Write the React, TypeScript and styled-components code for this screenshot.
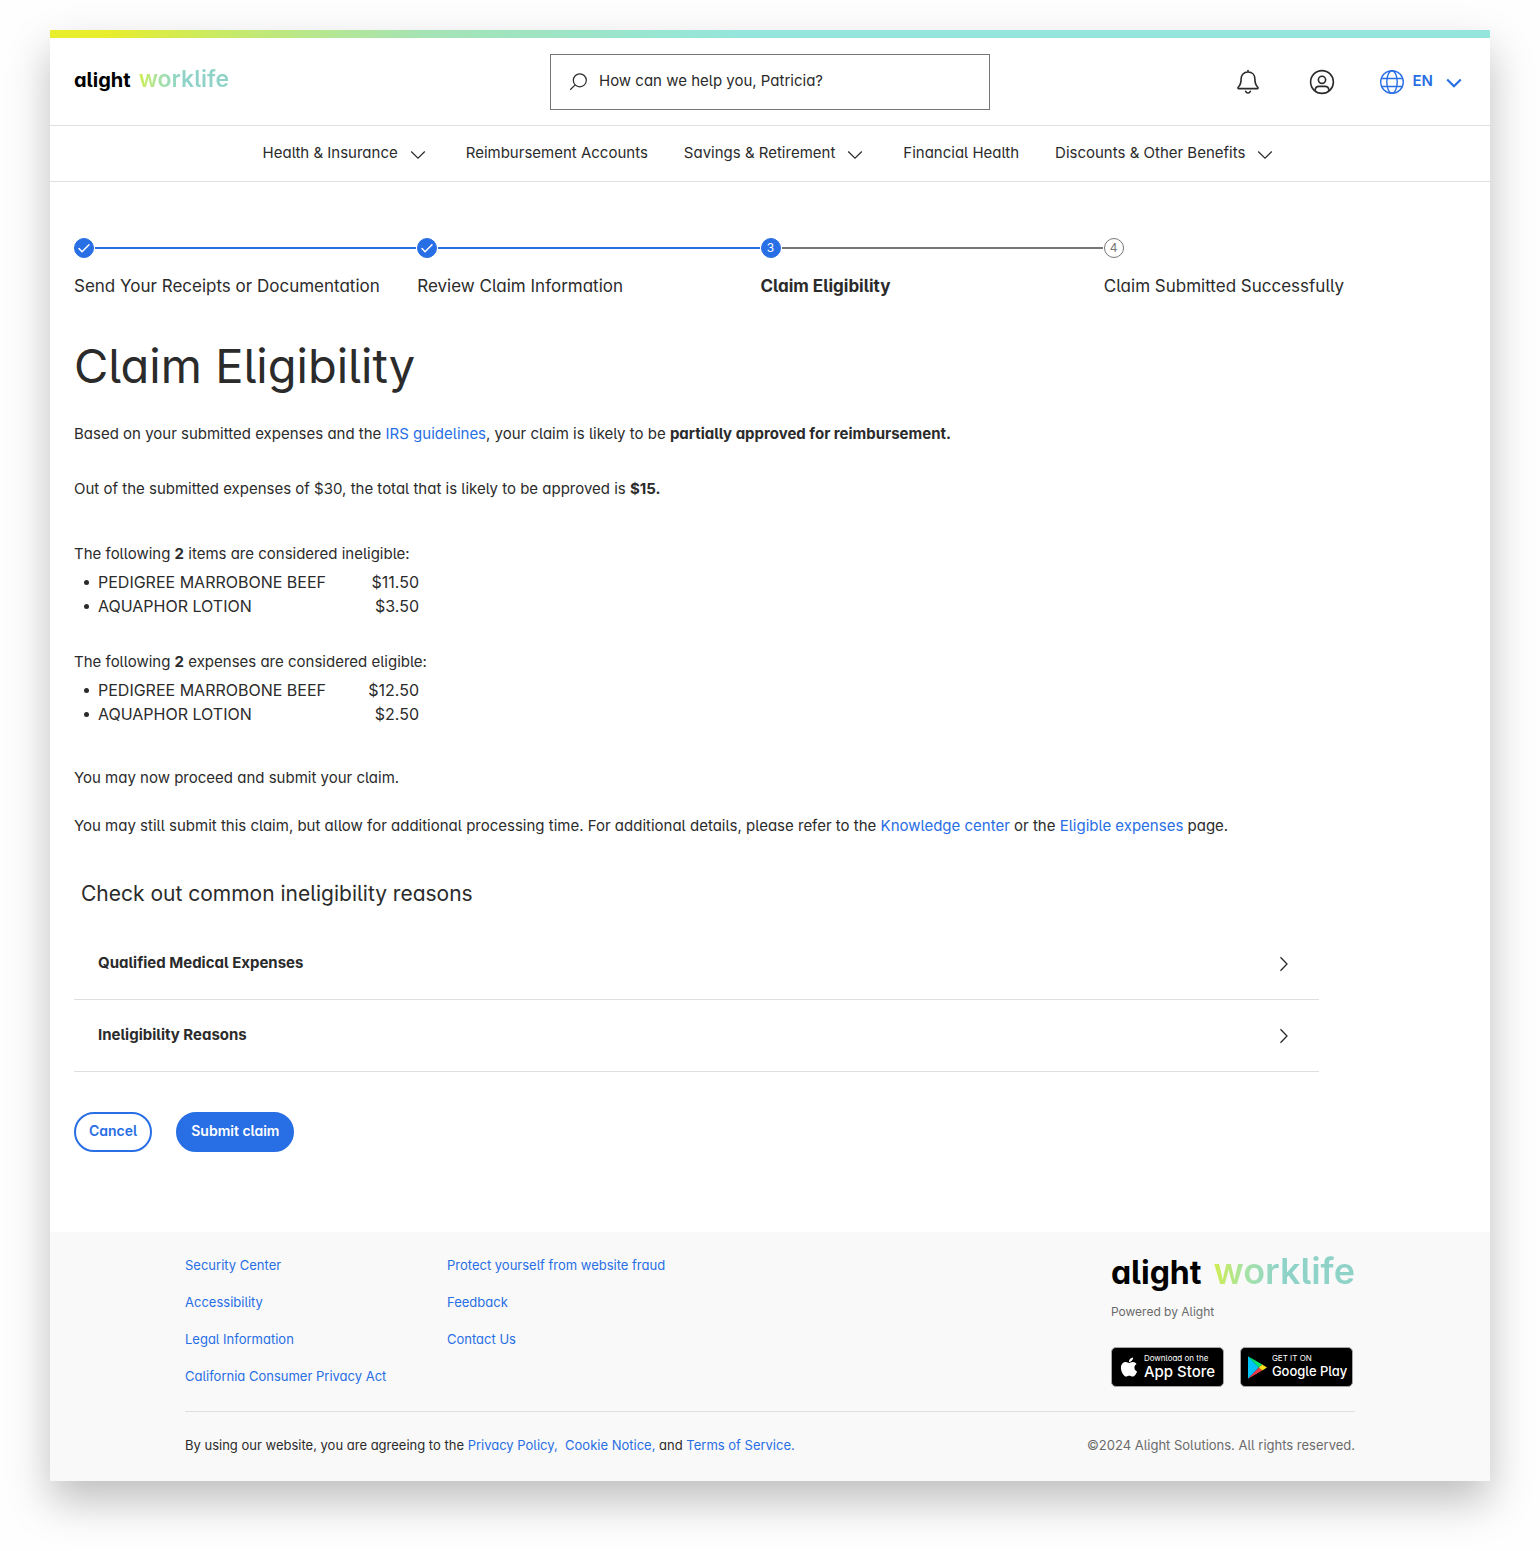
import React from "react";
import styled, { createGlobalStyle, css } from "styled-components";
import { FaApple } from "react-icons/fa";

const color = {
  text: "#2b2b2b",
  muted: "#6b6b6b",
  blue: "#286ee4",
  line: "#dfdfdf",
  grey: "#767676",
  footer: "#f9f9f9",
};

const GlobalStyle = createGlobalStyle`
  *, *::before, *::after { box-sizing: border-box; }
  body {
    margin: 0;
    background: #fefefe;
    color: ${color.text};
    font-family: Inter, "Noto Sans", sans-serif;
    font-feature-settings: "cv11", "cv05";
    font-size: 15px;
    line-height: 24px;
  }
  button, input { font: inherit; font-feature-settings: inherit; color: inherit; }
  h1, h2, p, ul, ol { margin: 0; padding: 0; font-weight: 400; }
  ul, ol { list-style: none; }
`;

const Frame = styled.div`
  padding: 30px 50px 70px;
`;

const Page = styled.div`
  background: #fff;
  box-shadow: 0 20px 40px rgba(0, 0, 0, 0.25);
`;

const BrandBar = styled.div`
  height: 8px;
  background: linear-gradient(90deg, #e8ed2c 4%, #c8ea66 12%, #b8e78c 18%, #a4e3b4 26%, #94e6dc 48%);
`;

const Header = styled.header`
  display: grid;
  grid-template-columns: 1fr minmax(200px, 440px) 1fr;
  align-items: center;
  padding: 16px 24px 15px;
  border-bottom: 1px solid ${color.line};
`;

const LogoText = styled.span<{ $large?: boolean }>`
  display: inline-flex;
  align-items: baseline;
  gap: ${(p) => (p.$large ? 12 : 8)}px;
  font-size: ${(p) => (p.$large ? 32 : 20)}px;
  line-height: ${(p) => (p.$large ? 32 : 24)}px;
  font-weight: 700;
  color: #000;
  white-space: nowrap;
`;

const Worklife = styled.span<{ $large?: boolean }>`
  font-size: ${(p) => (p.$large ? 36 : 23)}px;
  font-weight: 600;
  color: transparent;
  background: linear-gradient(90deg, #d0ee50, #a8e3a4 22%, #8fd3c8 45%);
  background-clip: text;
  -webkit-background-clip: text;
`;

const LogoLink = styled.a`
  justify-self: start;
  padding-bottom: 4px;
  text-decoration: none;
`;

const SearchBox = styled.label`
  display: flex;
  align-items: center;
  gap: 10px;
  height: 56px;
  padding: 0 18px;
  border: 1px solid ${color.grey};

  input {
    flex: 1;
    min-width: 0;
    padding: 0 0 3px;
    border: 0;
    outline: 0;
    background: none;
  }
  input::placeholder { color: ${color.text}; opacity: 1; }
`;

const Tools = styled.div`
  display: flex;
  align-items: center;
  justify-content: flex-end;
  gap: 42px;
`;

const IconButton = styled.button`
  display: flex;
  align-items: center;
  justify-content: center;
  width: 32px;
  height: 32px;
  padding: 0;
  border: 0;
  background: none;
  cursor: pointer;
`;

const LanguageButton = styled.button`
  display: flex;
  align-items: center;
  gap: 9px;
  padding: 0;
  border: 0;
  background: none;
  color: ${color.blue};
  font-weight: 600;
  cursor: pointer;
`;

const LanguageCode = styled.span`
  padding-bottom: 2px;
`;

const Nav = styled.nav`
  display: flex;
  flex-wrap: wrap;
  justify-content: center;
  gap: 0 36px;
  padding: 15px 24px 16px;
  border-bottom: 1px solid ${color.line};
`;

const navItem = css`
  display: flex;
  align-items: center;
  gap: 8px;
  padding: 0;
  border: 0;
  background: none;
  color: ${color.text};
  text-decoration: none;
  cursor: pointer;
`;
const NavLink = styled.a`${navItem}`;
const NavMenu = styled.button`${navItem}`;

const Main = styled.main`
  padding: 56px 24px 80px;
`;

const Stepper = styled.ol`
  display: grid;
  grid-template-columns: repeat(4, 1fr);
  padding-right: 19px;
  margin-bottom: 40px;
`;

const Step = styled.li<{ $current?: boolean }>`
  display: flex;
  flex-direction: column;
  gap: 16px;
  font-size: 17px;
  font-weight: ${(p) => (p.$current ? 700 : 400)};
`;

const Track = styled.div`
  display: flex;
  align-items: center;
  gap: 1px;
  padding-right: 1px;
`;

const Marker = styled.span<{ $filled: boolean }>`
  display: flex;
  flex: none;
  align-items: center;
  justify-content: center;
  width: 20px;
  height: 20px;
  border: 1px solid ${(p) => (p.$filled ? color.blue : color.grey)};
  border-radius: 50%;
  background: ${(p) => (p.$filled ? color.blue : "#fff")};
  color: ${(p) => (p.$filled ? "#fff" : color.grey)};
  font-size: 12px;
  font-weight: 400;
  line-height: 18px;
`;

const Connector = styled.span<{ $done: boolean }>`
  flex: 1;
  height: 2px;
  background: ${(p) => (p.$done ? color.blue : color.grey)};
`;

const Title = styled.h1`
  margin-bottom: 28px;
  font-size: 47px;
  line-height: 56px;
`;

const Paragraph = styled.p<{ $space: number }>`
  margin-bottom: ${(p) => p.$space}px;
`;

const Link = styled.a`
  color: ${color.blue};
  text-decoration: none;
`;

const ItemList = styled.ul<{ $space: number }>`
  max-width: 345px;
  padding-left: 10px;
  margin-bottom: ${(p) => p.$space}px;
  font-size: 16px;
`;

const Item = styled.li`
  display: flex;
  align-items: center;

  &::before {
    content: "";
    width: 5px;
    height: 5px;
    margin-right: 9px;
    border-radius: 50%;
    background: ${color.text};
  }
`;

const Price = styled.span`
  margin-left: auto;
`;

const SectionTitle = styled.h2`
  padding-left: 7px;
  margin-bottom: 18px;
  font-size: 21px;
  line-height: 32px;
`;

const Accordion = styled.div`
  max-width: 1245px;
  margin-bottom: 40px;
`;

const AccordionRow = styled.button`
  display: flex;
  align-items: center;
  justify-content: space-between;
  width: 100%;
  height: 72px;
  padding: 0 23px 2px 24px;
  border: 0;
  border-bottom: 1px solid ${color.line};
  background: none;
  font-weight: 700;
  text-align: left;
  cursor: pointer;
`;

const Actions = styled.div`
  display: flex;
  gap: 24px;
`;

const PillButton = styled.button<{ $primary?: boolean }>`
  height: 40px;
  padding: 0 13px 2px;
  border: 2px solid ${color.blue};
  border-radius: 20px;
  background: ${(p) => (p.$primary ? color.blue : "#fff")};
  color: ${(p) => (p.$primary ? "#fff" : color.blue)};
  font-size: 14px;
  font-weight: 600;
  cursor: pointer;
`;

const Footer = styled.footer`
  padding: 23px 24px 26px;
  background: ${color.footer};
  font-size: 13px;
  line-height: 20px;
`;

const FooterInner = styled.div`
  max-width: 1170px;
  margin: 0 auto;
`;

const FooterTop = styled.div`
  display: flex;
  flex-wrap: wrap;
  justify-content: space-between;
  gap: 24px;
  padding-bottom: 24px;
  border-bottom: 1px solid ${color.line};
`;

const FooterLinks = styled.div`
  display: grid;
  grid-template-columns: 262px auto;
`;

const LinkColumn = styled.ul`
  display: flex;
  flex-direction: column;
  gap: 17px;
`;

const Brand = styled.div`
  display: flex;
  flex-direction: column;
`;

const Powered = styled.p`
  margin: 13px 0 25px;
  color: ${color.muted};
  font-size: 12px;
`;

const Badges = styled.div`
  display: flex;
  gap: 16px;
`;

const Badge = styled.a`
  display: flex;
  align-items: center;
  gap: 4px;
  width: 113px;
  height: 40px;
  padding-left: 6px;
  border: 1px solid #a6a6a6;
  border-radius: 5px;
  background: #000;
  color: #fff;
  text-decoration: none;
  white-space: nowrap;
`;

const BadgeText = styled.span`
  display: flex;
  flex-direction: column;
`;

const BadgeSmall = styled.span`
  font-size: 8px;
  line-height: 9px;
`;

const BadgeName = styled.span<{ $size: number }>`
  font-size: ${(p) => p.$size}px;
  font-weight: 500;
  line-height: 17px;
`;

const FooterBottom = styled.div`
  display: flex;
  flex-wrap: wrap;
  justify-content: space-between;
  gap: 8px 24px;
  padding-top: 23px;
`;

const Copyright = styled.span`
  color: ${color.muted};
`;

const Chevron = ({ bold }: { bold?: boolean }) => (
  <svg width="24" height="24" viewBox="0 0 24 24" fill="none" stroke="currentColor" strokeWidth={bold ? 2.2 : 1.2} aria-hidden="true">
    <path d={bold ? "M5.2 9.5 12 16.2l6.8-6.7" : "M5.2 10.500 12 17.200l6.800-6.700"} />
  </svg>
);

const ChevronRight = () => (
  <svg width="24" height="24" viewBox="0 0 24 24" fill="none" stroke="currentColor" strokeWidth="1.3" aria-hidden="true">
    <path d="M8.5 6.2 15 13l-6.5 6.8" />
  </svg>
);

const SearchIcon = () => (
  <svg width="20" height="20" viewBox="0 0 20 20" fill="none" stroke="currentColor" strokeWidth="1.2" aria-hidden="true">
    <circle cx="10.800" cy="8.300" r="6.500" />
    <path d="M6.200 12.900 1.200 17.800" />
  </svg>
);

const BellIcon = () => (
  <svg width="24" height="26" viewBox="0 0 24 26" fill="none" stroke="currentColor" strokeWidth="1.6" strokeLinejoin="round" strokeLinecap="round" aria-hidden="true">
    <path d="M12 1.500v1.500M12 3c-4.300 0-6.900 3-6.900 7 0 4.600-.7 6.200-2.700 8-.9.900-.4 1.600.5 1.600h18.200c.9 0 1.400-.7.500-1.600-2-1.800-2.700-3.400-2.700-8 0-4-2.600-7-6.900-7Z" />
    <path d="M9.700 22.200c.4 1.200 1.200 1.800 2.300 1.800s1.900-.6 2.300-1.800" />
  </svg>
);

const UserIcon = () => (
  <svg width="26" height="26" viewBox="0 0 26 26" fill="none" stroke="currentColor" strokeWidth="1.6" aria-hidden="true">
    <circle cx="13" cy="13" r="11.4" />
    <circle cx="13" cy="10.800" r="3.600" />
    <path d="M6.200 21.800v-.6c0-2.400 1.500-3.800 3.800-3.800h6c2.300 0 3.800 1.400 3.800 3.800v.6" />
  </svg>
);

const GlobeIcon = () => (
  <svg width="24" height="24" viewBox="0 0 24 24" fill="none" stroke="currentColor" strokeWidth="1.400" aria-hidden="true">
    <circle cx="12" cy="12" r="11.300" />
    <ellipse cx="12" cy="12" rx="5.200" ry="11.300" />
    <path d="M1.600 8.500h20.800M1.600 16.500h20.800" />
  </svg>
);

const CheckIcon = () => (
  <svg width="18" height="18" viewBox="0 0 18 18" fill="none" stroke="#fff" strokeWidth="1.500" strokeLinecap="round" strokeLinejoin="round" aria-hidden="true">
    <path d="m4 9.500 3 3.200 7-6.900" />
  </svg>
);

const PlayIcon = () => (
  <svg width="21" height="23" viewBox="-1 0 21 23" aria-hidden="true">
    <path fill="#00c3f7" d="M0 .3v22.400L10.800 11.500z" />
    <path fill="#00ea72" d="M0 .3 14.200 8.400 10.800 11.500z" />
    <path fill="#ef3a49" d="M0 22.700 10.800 11.500l3.400 3.100z" />
    <path fill="#fde01a" d="M14.200 8.400 19 11.500l-4.800 3.100-3.400-3.100z" />
  </svg>
);

const Logo = ({ large }: { large?: boolean }) => (
  <LogoText $large={large}>
    alight <Worklife $large={large}>worklife</Worklife>
  </LogoText>
);

const navItems = [
  { label: "Health & Insurance", menu: true },
  { label: "Reimbursement Accounts", menu: false },
  { label: "Savings & Retirement", menu: true },
  { label: "Financial Health", menu: false },
  { label: "Discounts & Other Benefits", menu: true },
];

const steps = [
  "Send Your Receipts or Documentation",
  "Review Claim Information",
  "Claim Eligibility",
  "Claim Submitted Successfully",
];
const currentStep = 2;

const ineligible = [
  { name: "PEDIGREE MARROBONE BEEF", price: "$11.50" },
  { name: "AQUAPHOR LOTION", price: "$3.50" },
];
const eligible = [
  { name: "PEDIGREE MARROBONE BEEF", price: "$12.50" },
  { name: "AQUAPHOR LOTION", price: "$2.50" },
];

const footerLinks = [
  ["Security Center", "Accessibility", "Legal Information", "California Consumer Privacy Act"],
  ["Protect yourself from website fraud", "Feedback", "Contact Us"],
];

const Items = ({ items, space }: { items: { name: string; price: string }[]; space: number }) => (
  <ItemList $space={space}>
    {items.map((item) => (
      <Item key={item.name}>
        <span>{item.name}</span>
        <Price>{item.price}</Price>
      </Item>
    ))}
  </ItemList>
);

export default function App() {
  return (
    <>
      <GlobalStyle />
      <Frame>
        <Page>
          <BrandBar />
          <Header>
            <LogoLink href="#home"><Logo /></LogoLink>
            <SearchBox>
              <SearchIcon />
              <input type="search" aria-label="Search" placeholder="How can we help you, Patricia?" />
            </SearchBox>
            <Tools>
              <IconButton type="button" aria-label="Notifications"><BellIcon /></IconButton>
              <IconButton type="button" aria-label="Account"><UserIcon /></IconButton>
              <LanguageButton type="button" aria-haspopup="menu">
                <GlobeIcon />
                <LanguageCode>EN</LanguageCode>
                <Chevron bold />
              </LanguageButton>
            </Tools>
          </Header>
          <Nav>
            {navItems.map(({ label, menu }) =>
              menu ? (
                <NavMenu key={label} type="button" aria-haspopup="menu">{label}<Chevron /></NavMenu>
              ) : (
                <NavLink key={label} href="#section">{label}</NavLink>
              )
            )}
          </Nav>

          <Main>
            <Stepper>
              {steps.map((label, i) => (
                <Step key={label} $current={i === currentStep} aria-current={i === currentStep ? "step" : undefined}>
                  <Track>
                    <Marker $filled={i <= currentStep}>{i < currentStep ? <CheckIcon /> : i + 1}</Marker>
                    {i < steps.length - 1 && <Connector $done={i < currentStep} />}
                  </Track>
                  {label}
                </Step>
              ))}
            </Stepper>

            <Title>Claim Eligibility</Title>
            <Paragraph $space={31}>
              Based on your submitted expenses and the <Link href="#irs">IRS guidelines</Link>, your claim is likely to be{" "}
              <strong>partially approved for reimbursement.</strong>
            </Paragraph>
            <Paragraph $space={41}>
              Out of the submitted expenses of $30, the total that is likely to be approved is <strong>$15.</strong>
            </Paragraph>
            <Paragraph $space={4}>The following <strong>2</strong> items are considered ineligible:</Paragraph>
            <Items items={ineligible} space={32} />
            <Paragraph $space={4}>The following <strong>2</strong> expenses are considered eligible:</Paragraph>
            <Items items={eligible} space={40} />
            <Paragraph $space={24}>You may now proceed and submit your claim.</Paragraph>
            <Paragraph $space={40}>
              You may still submit this claim, but allow for additional processing time. For additional details, please refer to the{" "}
              <Link href="#knowledge">Knowledge center</Link> or the <Link href="#eligible">Eligible expenses</Link> page.
            </Paragraph>

            <SectionTitle>Check out common ineligibility reasons</SectionTitle>
            <Accordion>
              <AccordionRow type="button" aria-expanded="false">Qualified Medical Expenses<ChevronRight /></AccordionRow>
              <AccordionRow type="button" aria-expanded="false">Ineligibility Reasons<ChevronRight /></AccordionRow>
            </Accordion>

            <Actions>
              <PillButton type="button">Cancel</PillButton>
              <PillButton type="button" $primary>Submit claim</PillButton>
            </Actions>
          </Main>

          <Footer>
            <FooterInner>
              <FooterTop>
                <FooterLinks>
                  {footerLinks.map((column) => (
                    <LinkColumn key={column[0]}>
                      {column.map((label) => (
                        <li key={label}><Link href="#info">{label}</Link></li>
                      ))}
                    </LinkColumn>
                  ))}
                </FooterLinks>
                <Brand>
                  <Logo large />
                  <Powered>Powered by Alight</Powered>
                  <Badges>
                    <Badge href="#app-store">
                      <FaApple size={22} aria-hidden="true" />
                      <BadgeText>
                        <BadgeSmall>Download on the</BadgeSmall>
                        <BadgeName $size={15}>App Store</BadgeName>
                      </BadgeText>
                    </Badge>
                    <Badge href="#google-play">
                      <PlayIcon />
                      <BadgeText>
                        <BadgeSmall>GET IT ON</BadgeSmall>
                        <BadgeName $size={13}>Google Play</BadgeName>
                      </BadgeText>
                    </Badge>
                  </Badges>
                </Brand>
              </FooterTop>
              <FooterBottom>
                <span>
                  By using our website, you are agreeing to the <Link href="#privacy">Privacy Policy,</Link>{" "}
                  &nbsp;<Link href="#cookies">Cookie Notice,</Link> and <Link href="#terms">Terms of Service.</Link>
                </span>
                <Copyright>©2024 Alight Solutions. All rights reserved.</Copyright>
              </FooterBottom>
            </FooterInner>
          </Footer>
        </Page>
      </Frame>
    </>
  );
}
